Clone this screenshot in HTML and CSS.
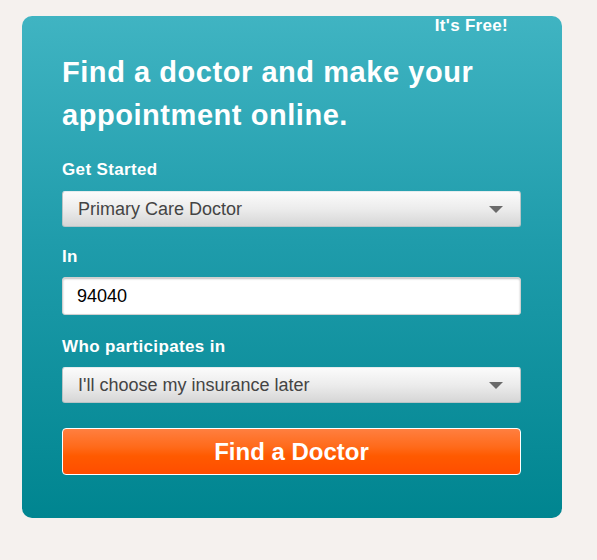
FILE: index.html
```html
<!DOCTYPE html>
<html>
<head>
<meta charset="utf-8">
<link rel="stylesheet" href="styles.css">
</head>
<body>
<div class="card">
  <div class="free">It's Free!</div>
  <h1 class="title">Find a doctor and make your appointment online.</h1>
  <div class="label label-first">Get Started</div>
  <div class="select"><span>Primary Care Doctor</span><span class="arrow"></span></div>
  <div class="label label-in">In</div>
  <div class="input">94040</div>
  <div class="label label-who">Who participates in</div>
  <div class="select"><span>I'll choose my insurance later</span><span class="arrow"></span></div>
  <button class="btn">Find a Doctor</button>
</div>
</body>
</html>
```
FILE: styles.css
```css
html, body {
  margin: 0;
  background: #f5f1ee;
}
body {
  padding: 16px 0 0 22px;
  font-family: "Liberation Sans", Arial, Helvetica, sans-serif;
}
.card {
  width: 540px;
  height: 502px;
  box-sizing: border-box;
  padding: 0 41px 0 40px;
  border-radius: 10px;
  background: linear-gradient(to bottom, #40b4c2 0%, #1f9cab 45%, #008590 100%);
  color: #fff;
  display: flex;
  flex-direction: column;
}
.free {
  align-self: flex-end;
  margin-right: 13px;
  font-weight: bold;
  font-size: 17px;
  line-height: 20px;
  letter-spacing: 0.3px;
}
.title {
  margin: 15px 0 0 0;
  font-size: 29px;
  line-height: 43px;
  font-weight: bold;
  letter-spacing: 0.55px;
}
.label {
  font-weight: bold;
  font-size: 17px;
  line-height: 20px;
  letter-spacing: 0.35px;
}
.label-first { margin-top: 23px; margin-bottom: 11px; }
.label-in { margin-top: 20px; margin-bottom: 10px; }
.label-who { margin-top: 22px; margin-bottom: 10px; }
.select {
  height: 36px;
  box-sizing: border-box;
  border: 1px solid #b9c4c6;
  border-top-color: #e4ecee;
  border-radius: 3px;
  background: linear-gradient(to bottom, #fbfbfb 0%, #ececec 50%, #d6d6d6 100%);
  display: flex;
  align-items: center;
  justify-content: space-between;
  padding: 0 17px 0 15px;
  color: #444;
  font-size: 18px;
}
.arrow {
  width: 0;
  height: 0;
  border-left: 7px solid transparent;
  border-right: 7px solid transparent;
  border-top: 7px solid #6a6a6a;
}
.input {
  height: 38px;
  box-sizing: border-box;
  border: 1px solid #d0d0d0;
  border-radius: 3px;
  background: #fff;
  box-shadow: inset 0 1px 2px rgba(0,0,0,0.25);
  display: flex;
  align-items: center;
  padding: 0 14px;
  color: #000;
  font-size: 18px;
}
.btn {
  margin-top: 25px;
  height: 47px;
  border: 1px solid #fff;
  border-radius: 4px;
  background: linear-gradient(to bottom, #ff7f40 0%, #ff6a1a 40%, #ff5a00 60%, #ff4d00 100%);
  color: #fff;
  font-family: "Liberation Sans", Arial, Helvetica, sans-serif;
  font-weight: bold;
  font-size: 24px;
  padding: 0;
}
```
